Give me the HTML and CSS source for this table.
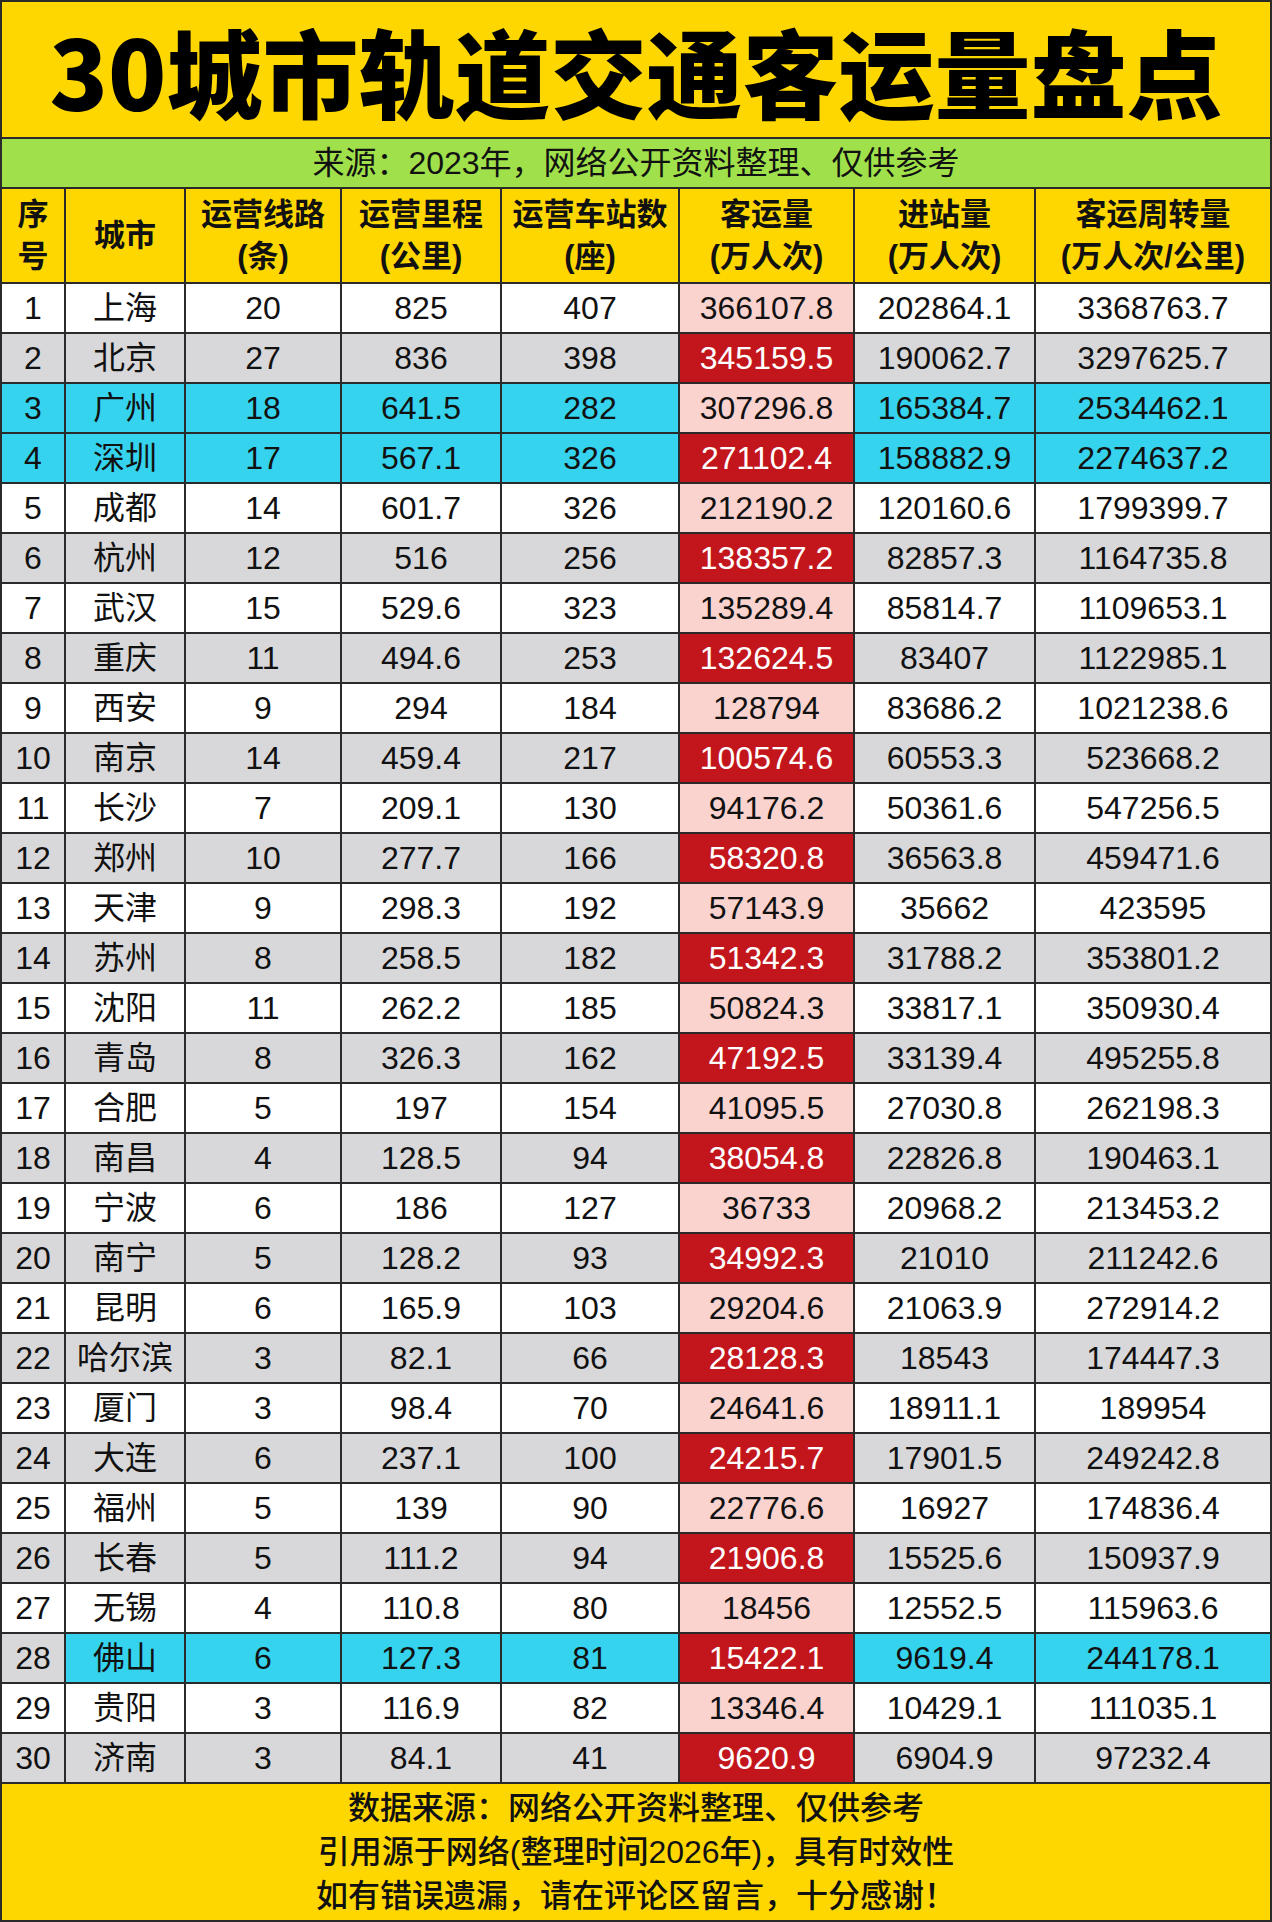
FILE: index.html
```html
<!DOCTYPE html>
<html lang="zh-CN">
<head>
<meta charset="utf-8">
<title>30城市轨道交通客运量盘点</title>
<link rel="stylesheet" href="styles.css">
</head>
<body>
<div class="sheet">
  <div class="title">30城市轨道交通客运量盘点</div>
  <div class="source">来源：2023年，网络公开资料整理、仅供参考</div>
  <table class="data">
    <colgroup>
      <col class="c-idx"><col class="c-city"><col class="c-lines"><col class="c-km"><col class="c-st"><col class="c-kv"><col class="c-in"><col class="c-turn">
    </colgroup>
    <thead>
      <tr>
        <th>序<br>号</th>
        <th>城市</th>
        <th>运营线路<br>(条)</th>
        <th>运营里程<br>(公里)</th>
        <th>运营车站数<br>(座)</th>
        <th>客运量<br>(万人次)</th>
        <th>进站量<br>(万人次)</th>
        <th>客运周转量<br>(万人次/公里)</th>
      </tr>
    </thead>
    <tbody>
      <tr><td>1</td><td>上海</td><td>20</td><td>825</td><td>407</td><td class="kv">366107.8</td><td>202864.1</td><td>3368763.7</td></tr>
      <tr><td>2</td><td>北京</td><td>27</td><td>836</td><td>398</td><td class="kv">345159.5</td><td>190062.7</td><td>3297625.7</td></tr>
      <tr class="hl"><td>3</td><td>广州</td><td>18</td><td>641.5</td><td>282</td><td class="kv">307296.8</td><td>165384.7</td><td>2534462.1</td></tr>
      <tr class="hl"><td>4</td><td>深圳</td><td>17</td><td>567.1</td><td>326</td><td class="kv">271102.4</td><td>158882.9</td><td>2274637.2</td></tr>
      <tr><td>5</td><td>成都</td><td>14</td><td>601.7</td><td>326</td><td class="kv">212190.2</td><td>120160.6</td><td>1799399.7</td></tr>
      <tr><td>6</td><td>杭州</td><td>12</td><td>516</td><td>256</td><td class="kv">138357.2</td><td>82857.3</td><td>1164735.8</td></tr>
      <tr><td>7</td><td>武汉</td><td>15</td><td>529.6</td><td>323</td><td class="kv">135289.4</td><td>85814.7</td><td>1109653.1</td></tr>
      <tr><td>8</td><td>重庆</td><td>11</td><td>494.6</td><td>253</td><td class="kv">132624.5</td><td>83407</td><td>1122985.1</td></tr>
      <tr><td>9</td><td>西安</td><td>9</td><td>294</td><td>184</td><td class="kv">128794</td><td>83686.2</td><td>1021238.6</td></tr>
      <tr><td>10</td><td>南京</td><td>14</td><td>459.4</td><td>217</td><td class="kv">100574.6</td><td>60553.3</td><td>523668.2</td></tr>
      <tr><td>11</td><td>长沙</td><td>7</td><td>209.1</td><td>130</td><td class="kv">94176.2</td><td>50361.6</td><td>547256.5</td></tr>
      <tr><td>12</td><td>郑州</td><td>10</td><td>277.7</td><td>166</td><td class="kv">58320.8</td><td>36563.8</td><td>459471.6</td></tr>
      <tr><td>13</td><td>天津</td><td>9</td><td>298.3</td><td>192</td><td class="kv">57143.9</td><td>35662</td><td>423595</td></tr>
      <tr><td>14</td><td>苏州</td><td>8</td><td>258.5</td><td>182</td><td class="kv">51342.3</td><td>31788.2</td><td>353801.2</td></tr>
      <tr><td>15</td><td>沈阳</td><td>11</td><td>262.2</td><td>185</td><td class="kv">50824.3</td><td>33817.1</td><td>350930.4</td></tr>
      <tr><td>16</td><td>青岛</td><td>8</td><td>326.3</td><td>162</td><td class="kv">47192.5</td><td>33139.4</td><td>495255.8</td></tr>
      <tr><td>17</td><td>合肥</td><td>5</td><td>197</td><td>154</td><td class="kv">41095.5</td><td>27030.8</td><td>262198.3</td></tr>
      <tr><td>18</td><td>南昌</td><td>4</td><td>128.5</td><td>94</td><td class="kv">38054.8</td><td>22826.8</td><td>190463.1</td></tr>
      <tr><td>19</td><td>宁波</td><td>6</td><td>186</td><td>127</td><td class="kv">36733</td><td>20968.2</td><td>213453.2</td></tr>
      <tr><td>20</td><td>南宁</td><td>5</td><td>128.2</td><td>93</td><td class="kv">34992.3</td><td>21010</td><td>211242.6</td></tr>
      <tr><td>21</td><td>昆明</td><td>6</td><td>165.9</td><td>103</td><td class="kv">29204.6</td><td>21063.9</td><td>272914.2</td></tr>
      <tr><td>22</td><td>哈尔滨</td><td>3</td><td>82.1</td><td>66</td><td class="kv">28128.3</td><td>18543</td><td>174447.3</td></tr>
      <tr><td>23</td><td>厦门</td><td>3</td><td>98.4</td><td>70</td><td class="kv">24641.6</td><td>18911.1</td><td>189954</td></tr>
      <tr><td>24</td><td>大连</td><td>6</td><td>237.1</td><td>100</td><td class="kv">24215.7</td><td>17901.5</td><td>249242.8</td></tr>
      <tr><td>25</td><td>福州</td><td>5</td><td>139</td><td>90</td><td class="kv">22776.6</td><td>16927</td><td>174836.4</td></tr>
      <tr><td>26</td><td>长春</td><td>5</td><td>111.2</td><td>94</td><td class="kv">21906.8</td><td>15525.6</td><td>150937.9</td></tr>
      <tr><td>27</td><td>无锡</td><td>4</td><td>110.8</td><td>80</td><td class="kv">18456</td><td>12552.5</td><td>115963.6</td></tr>
      <tr class="hl"><td class="idx-gray">28</td><td>佛山</td><td>6</td><td>127.3</td><td>81</td><td class="kv">15422.1</td><td>9619.4</td><td>244178.1</td></tr>
      <tr><td>29</td><td>贵阳</td><td>3</td><td>116.9</td><td>82</td><td class="kv">13346.4</td><td>10429.1</td><td>111035.1</td></tr>
      <tr><td>30</td><td>济南</td><td>3</td><td>84.1</td><td>41</td><td class="kv">9620.9</td><td>6904.9</td><td>97232.4</td></tr>
    </tbody>
  </table>
  <div class="footer">
    <p>数据来源：网络公开资料整理、仅供参考</p>
    <p>引用源于网络(整理时间2026年)，具有时效性</p>
    <p>如有错误遗漏，请在评论区留言，十分感谢！</p>
  </div>
</div>
</body>
</html>
```

FILE: styles.css
```css
html, body {
  margin: 0;
  padding: 0;
  background: #ffffff;
}

body {
  width: 1272px;
  font-family: "Liberation Sans", "Noto Sans CJK SC", sans-serif;
  color: #111111;
}

.sheet {
  width: 1272px;
  height: 1922px;
  box-sizing: border-box;
  border: 2px solid #2a2a2a;
  background: #ffd700;
  display: flex;
  flex-direction: column;
}

.title {
  height: 135px;
  flex: none;
  border-bottom: 2px solid #2a2a2a;
  display: flex;
  align-items: center;
  justify-content: center;
  font-family: "Noto Sans CJK SC", sans-serif;
  font-weight: 900;
  font-size: 96px;
  line-height: 1;
  color: #000000;
}

.source {
  height: 48px;
  flex: none;
  border-bottom: 2px solid #2a2a2a;
  background: #a0e14b;
  text-align: center;
  font-size: 32px;
  line-height: 48px;
  color: #111111;
}

.data {
  width: 1268px;
  flex: none;
  border-collapse: separate;
  border-spacing: 0;
  table-layout: fixed;
}

.c-idx { width: 64px; }
.c-city { width: 120px; }
.c-lines { width: 156px; }
.c-km { width: 160px; }
.c-st { width: 178px; }
.c-kv { width: 175px; }
.c-in { width: 181px; }
.c-turn { width: 234px; }

.data th,
.data td {
  box-sizing: border-box;
  padding: 0;
  text-align: center;
  border-right: 2px solid #2a2a2a;
  border-bottom: 2px solid #2a2a2a;
  white-space: nowrap;
}

.data th:last-child,
.data td:last-child {
  border-right: 0;
}

.data th {
  height: 95px;
  background: #ffd700;
  font-size: 31px;
  font-weight: 700;
  line-height: 42px;
  color: #111111;
}

.data td {
  height: 50px;
  font-size: 32px;
  line-height: 48px;
  background: #ffffff;
}

.data tbody tr:nth-child(even) td {
  background: #d8d8da;
}

.data tbody tr.hl td {
  background: #35d3ee;
}

.data tbody tr.hl td.idx-gray {
  background: #d8d8da;
}

.data tbody tr:nth-child(odd) td.kv {
  background: #fad3cf;
  color: #111111;
}

.data tbody tr:nth-child(even) td.kv {
  background: #c3161c;
  color: #ffffff;
}

.footer {
  flex: 1;
  display: flex;
  flex-direction: column;
  justify-content: center;
  align-items: center;
  font-size: 32px;
  font-weight: 500;
  line-height: 44px;
  color: #111111;
}

.footer p {
  margin: 0;
}
```
